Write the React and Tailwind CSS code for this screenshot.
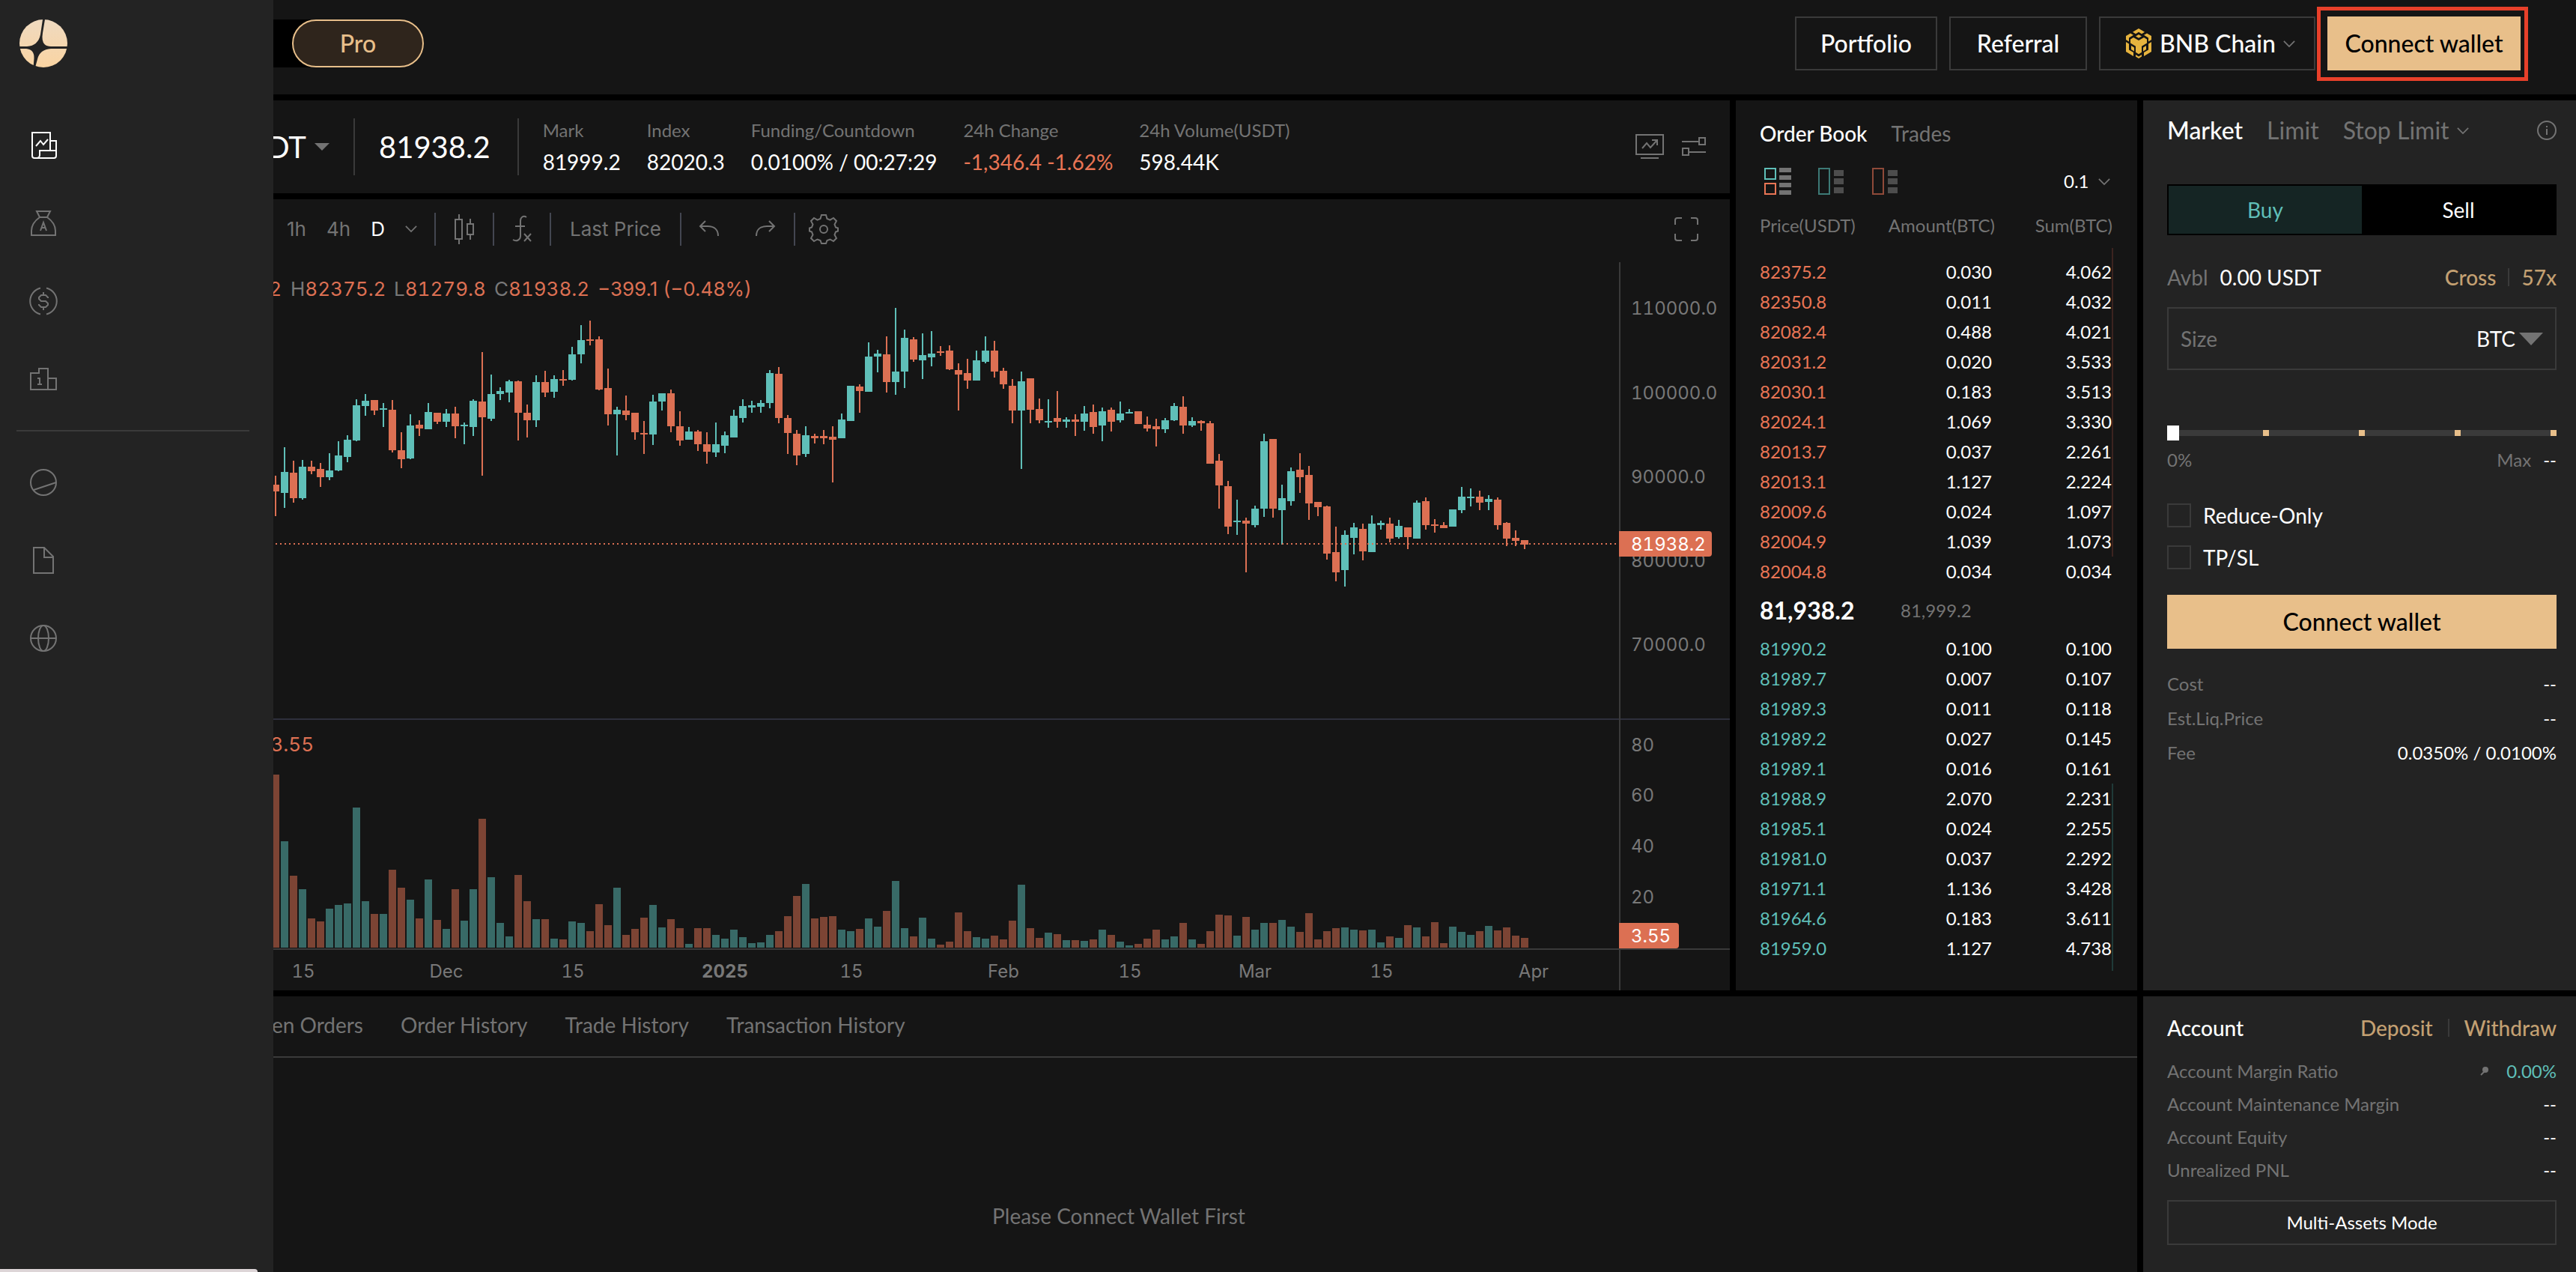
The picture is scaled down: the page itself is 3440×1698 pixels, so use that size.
const UP = "#5fbfb8";
const DOWN = "#dc7053";

// Each candle: direction, high, body top, body bottom, low, volume top (thirds of a pixel down from its pane).
const CANDLES = [
  "r 885 921 948 1047 282", "g 771 870 954 1014 549", "r 825 873 975 993 687", "g 822 849 975 981 741",
  "r 825 849 867 879 858", "r 834 858 891 930 870", "g 795 864 891 903 819", "g 747 804 864 867 804",
  "g 723 741 810 831 798", "g 579 603 744 747 414", "g 558 585 606 645 789", "r 582 582 624 642 840",
  "g 594 615 621 690 840", "r 582 621 783 792 663", "r 711 783 819 855 735", "g 639 684 816 819 783",
  "r 663 681 696 726 858", "g 594 630 699 699 702", "r 633 633 669 678 864", "g 618 636 669 690 900",
  "r 609 636 687 735 741", "g 672 680 686 759 867", "g 579 585 690 726 741", "r 390 588 651 885 459",
  "g 480 558 657 666 693", "g 531 546 558 582 876", "g 501 507 552 591 930", "r 504 507 633 744 684",
  "r 600 633 663 732 789", "g 483 510 663 690 861", "r 465 510 552 570 861", "g 483 498 549 573 939",
  "r 462 498 504 525 942", "g 369 399 501 504 870", "g 282 342 399 435 876", "r 264 338 344 363 909",
  "r 327 339 540 543 801", "r 456 534 639 684 885", "g 609 621 639 804 735", "r 564 624 642 663 924",
  "r 633 633 711 741 900", "r 666 714 720 798 855", "g 561 588 720 762 804", "g 555 555 588 624 894",
  "r 540 555 687 711 861", "r 627 687 744 765 897", "g 690 708 741 741 960", "r 702 708 759 786 897",
  "r 711 759 789 837 897", "g 672 759 792 810 924", "g 708 723 765 795 939", "g 621 645 732 732 903",
  "g 579 606 654 672 933", "g 585 603 612 633 957", "g 582 594 609 633 954", "g 462 474 594 615 924",
  "r 450 477 654 675 909", "r 642 654 714 798 849", "r 702 717 804 843 768", "g 687 723 798 810 720",
  "r 717 726 735 756 858", "r 702 726 735 759 852", "r 687 729 741 912 849", "g 636 660 735 735 903",
  "g 525 525 666 666 909", "r 519 528 546 633 900", "g 351 408 549 549 858", "g 381 396 408 471 891",
  "r 327 399 510 552 828", "g 213 468 510 561 708", "g 300 333 468 534 897", "r 330 339 420 429 930",
  "g 315 402 423 498 855", "g 306 396 411 447 939", "r 366 386 392 405 963", "r 363 384 459 462 951",
  "r 435 462 480 624 834", "r 417 474 504 537 909", "g 384 423 504 504 933", "g 327 384 429 435 939",
  "r 345 384 468 492 927", "r 453 465 519 537 942", "r 498 525 624 675 867", "g 468 507 624 858 723",
  "r 495 495 621 675 897", "r 576 618 663 675 936", "g 579 665 671 693 915", "r 546 654 669 693 921",
  "g 651 660 669 693 945", "r 639 660 669 726 945", "g 606 636 669 705 948", "r 600 630 690 717 942",
  "g 612 627 684 747 903", "r 612 621 669 708 924", "g 588 636 663 672 951", "g 618 630 636 636 966",
  "r 627 627 678 678 960", "r 648 681 696 708 939", "r 657 687 699 768 903", "g 654 663 699 714 942",
  "g 594 606 663 666 930", "r 567 609 684 717 876", "g 651 666 684 690 942", "r 663 666 675 705 960",
  "r 666 675 837 837 909", "r 798 825 924 1017 843", "r 906 927 1089 1119 846", "g 981 1065 1071 1122 927",
  "r 1053 1065 1077 1272 852", "g 1005 1017 1083 1092 903", "g 717 747 1017 1050 876", "r 738 738 1017 1053 876",
  "g 921 975 1023 1162 864", "g 852 867 987 1005 891", "r 795 861 891 954 912", "r 846 882 996 1062 837",
  "r 990 990 1010 1047 942", "r 1005 1008 1197 1220 909", "r 1089 1191 1271 1308 897", "g 1104 1122 1263 1328 894",
  "g 1073 1092 1134 1200 903", "r 1077 1098 1187 1224 906", "g 1044 1077 1191 1191 903", "g 1065 1073 1083 1101 954",
  "r 1053 1077 1137 1152 930", "g 1062 1086 1130 1137 936", "r 1092 1092 1130 1179 885", "g 984 993 1137 1137 894",
  "r 971 987 1083 1101 930", "r 1059 1081 1087 1112 873", "r 1071 1083 1095 1095 957", "g 1020 1020 1089 1089 891",
  "g 930 969 1022 1035 912", "g 936 970 976 1008 924", "r 945 969 993 1022 909", "g 963 977 990 1022 888",
  "r 971 981 1083 1101 906", "r 1071 1073 1137 1167 894", "r 1104 1134 1146 1167 927", "r 1143 1143 1161 1179 936",
].map((row) => {
  const [dir, ...v] = row.split(" ");
  return { up: dir === "g", v: v.map(Number) };
});

const ASKS = [
  ["82375.2", "0.030", "4.062"], ["82350.8", "0.011", "4.032"], ["82082.4", "0.488", "4.021"],
  ["82031.2", "0.020", "3.533"], ["82030.1", "0.183", "3.513"], ["82024.1", "1.069", "3.330"],
  ["82013.7", "0.037", "2.261"], ["82013.1", "1.127", "2.224"], ["82009.6", "0.024", "1.097"],
  ["82004.9", "1.039", "1.073"], ["82004.8", "0.034", "0.034"],
];
const BIDS = [
  ["81990.2", "0.100", "0.100"], ["81989.7", "0.007", "0.107"], ["81989.3", "0.011", "0.118"],
  ["81989.2", "0.027", "0.145"], ["81989.1", "0.016", "0.161"], ["81988.9", "2.070", "2.231"],
  ["81985.1", "0.024", "2.255"], ["81981.0", "0.037", "2.292"], ["81971.1", "1.136", "3.428"],
  ["81964.6", "0.183", "3.611"], ["81959.0", "1.127", "4.738"],
];

function Icon({ w = 48, h = w, vb, className = "", sw = 2, children }) {
  return (
    <svg width={w} height={h} viewBox={vb || `0 0 ${w} ${h}`} fill="none" stroke="currentColor" strokeWidth={sw} className={`shrink-0 ${className}`} aria-hidden="true">
      {children}
    </svg>
  );
}

function Chevron({ className = "" }) {
  return <Icon w={16} h={11} vb="0 0 18 12" className={className}><path d="M1 2l8 8 8-8" /></Icon>;
}

function Logo() {
  return (
    <svg width="64" height="64" viewBox="0 0 64 64" aria-hidden="true">
      <defs>
        <linearGradient id="logoFill" x1="0" y1="0" x2="0" y2="1">
          <stop offset="0" stopColor="#efdac0" />
          <stop offset="1" stopColor="#fad4a2" />
        </linearGradient>
        <clipPath id="logoQuarters">
          <path d="M0 0H31L28 20Q25 35 10 36H0Z" />
          <path d="M34 0L31 18Q28 36 42 36H64V0Z" />
          <path d="M0 39H9Q20 40 19.500 52L18.500 64H0Z" />
          <path d="M64 39H42Q27 40 24 53L21 64H64Z" />
        </clipPath>
      </defs>
      <circle cx="32" cy="32" r="32" fill="url(#logoFill)" clipPath="url(#logoQuarters)" />
    </svg>
  );
}

const NAV_TOP = [
  ["Trade", <><path d="M33 31V7H9v31a3 3 0 0 0 3 3h26a3 3 0 0 0 3-3V18h-8" /><path d="M41 31H19v6a4 4 0 0 1-4 4" /><path d="M14 25l6-7 4 5 6-7" /></>],
  ["Earn", <><path d="M15 8h18l-4 8H19z" /><path d="M19 16C12 21 8 27 8 34v6h32v-6c0-7-4-13-11-18" /><path d="M20 34l4-11 4 11M21 30h6" /></>],
  ["Rewards", <><path d="M20 6.500a18 18 0 0 0 0 35M28 6.500a18 18 0 0 1 0 35" /><path d="M30 20v-1l-3-3h-6l-3 3v2l3 3h6l3 3v2l-3 3h-6l-3-3v-1M24 12v4M24 32v4" /></>],
  ["Leaderboard", <><path d="M7 16h11v-6h12v28H7zM30 23h11v15H30" /><path d="M16 23h3v8M16 31h6" /></>],
];
const NAV_BOTTOM = [
  ["Explore", <><circle cx="24" cy="24" r="17" /><path d="M11 34l30-10" /></>],
  ["Docs", <path d="M25 7H11v34h26V19zM25 7v13h12" />],
  ["Language", <><circle cx="24" cy="24" r="17" /><ellipse cx="24" cy="24" rx="7" ry="17" /><path d="M7 24h34" /></>],
];

function NavItem({ label, active, children }) {
  return (
    <a href="#" aria-label={label} className={`flex h-[104px] items-center pl-[34px] ${active ? "text-white" : "text-[#737373]"}`}>
      <Icon>{children}</Icon>
    </a>
  );
}

function Sidebar() {
  return (
    <aside className="absolute inset-y-0 left-0 z-10 w-[365px] bg-[#232323]">
      <a href="#" aria-label="Home" className="block h-[142px] pt-[26px] pl-[26px]"><Logo /></a>
      <nav>
        {NAV_TOP.map(([l, p], i) => <NavItem key={l} label={l} active={i === 0}>{p}</NavItem>)}
        <hr className="my-4 mr-8 ml-[22px] border-t-2 border-[#3a3a3a]" />
        {NAV_BOTTOM.map(([l, p]) => <NavItem key={l} label={l}>{p}</NavItem>)}
      </nav>
      <div className="absolute bottom-0 left-0 h-1 w-[344px] rounded-tr-md bg-[#ddd5d7]" />
    </aside>
  );
}

function BnbIcon() {
  const side = (
    <>
      <path d="M7 6.500l4 2.300-6 3.600v5L1 15v-5z" />
      <path d="M1 18l4 2.400v8l6 3.600v5L1 31z" />
      <path d="M8 23l4 2.400v5L8 28z" />
    </>
  );
  return (
    <svg width="36" height="40" viewBox="0 0 36 40" fill="#e6b33e" aria-hidden="true">
      <path d="M18 0l8 4.800-4 2.400-4-2.400-4 2.400-4-2.400z" />
      <path d="M18 8l4 2.400-4 2.400-4-2.400z" />
      <path d="M11 12l7 4 7-4 4 2.400v5l-7 4.400v8l-4 2.400-4-2.400v-8l-7-4.400v-5z" />
      <path d="M14 35l4 2.400 4-2.400v2.600L18 40l-4-2.400z" />
      {side}
      <g transform="matrix(-1 0 0 1 36 0)">{side}</g>
    </svg>
  );
}

function Header() {
  const box = "flex h-[72px] items-center justify-center border-2 border-[#3a3a3a] text-[32px] font-medium text-white";
  return (
    <header className="ml-[134px] flex h-[126px] items-center justify-between bg-[#151515] pr-[74px] pb-[10px]">
      <div className="flex h-16 w-[432px] justify-end rounded-full bg-black">
        <button className="h-16 w-44 rounded-full border-2 border-[#e8bf8a] bg-[#2f251c] text-[32px] leading-none font-medium text-[#e8bf8a]">Pro</button>
      </div>
      <div className="flex gap-4">
        <a href="#" className={`${box} min-w-[190px]`}>Portfolio</a>
        <a href="#" className={`${box} min-w-[184px]`}>Referral</a>
        <button className={`${box} min-w-[289px] gap-[10px] pl-2`}>
          <BnbIcon />BNB Chain<Chevron className="text-[#737373]" />
        </button>
        <div className="relative">
          <button className="h-[72px] w-[258px] bg-[#e8bf8a] text-[32px] font-medium text-black">Connect wallet</button>
          <div className="pointer-events-none absolute -top-[13px] -right-[10px] -bottom-[14px] -left-[14px] border-5 border-[#e8402a]" />
        </div>
      </div>
    </header>
  );
}

function Stat({ label, value, tone = "text-white" }) {
  return (
    <div className="flex flex-col gap-[6px]">
      <dt className="text-[24px] leading-9 text-[#737373]">{label}</dt>
      <dd className={`text-[28px] leading-9 ${tone}`}>{value}</dd>
    </div>
  );
}

function Ticker() {
  return (
    <section className="flex h-[124px] items-center bg-[#151515] pr-8">
      <button className="flex w-[306px] items-center justify-end gap-[11px] text-[40px] text-white">
        BTCUSDT
        <Icon w={20} h={10} className="text-[#737373]"><path d="M0 0h20L10 10z" fill="currentColor" stroke="none" /></Icon>
      </button>
      <div className="ml-8 h-[76px] w-[2px] bg-[#3a3a3a]" />
      <div className="mr-9 ml-8 text-[40px] text-white">81938.2</div>
      <div className="h-[76px] w-[2px] bg-[#3a3a3a]" />
      <dl className="ml-8 flex grow gap-[35px] pb-[2px]">
        <Stat label="Mark" value="81999.2" />
        <Stat label="Index" value="82020.3" />
        <Stat label="Funding/Countdown" value="0.0100% / 00:27:29" />
        <Stat label="24h Change" value="-1,346.4 -1.62%" tone="text-[#e97555]" />
        <Stat label="24h Volume(USDT)" value="598.44K" />
      </dl>
      <div className="flex items-center gap-6 text-[#737373]">
        <button aria-label="Chart"><Icon w={38} h={34}><path d="M1 1h36v26H1zM7 32h24M9 19l6-7 5 6 9-10M22 8h7v7" /></Icon></button>
        <button aria-label="Preferences"><Icon w={32} h={26}><path d="M0 6h22M23 1h8v9h-8zM32 20H10M1 15h8v9H1z" /></Icon></button>
      </div>
    </section>
  );
}

function Sep() {
  return <div className="h-11 w-[2px] bg-[#434651]" />;
}

function Toolbar() {
  return (
    <div className="flex h-[84px] items-center pr-[42px] pb-[5px] pl-[249px] font-['Inter',sans-serif] text-[26px] text-[#737373]">
      <div className="flex w-[197px] items-center gap-[27px]">
        <button>1h</button>
        <button>4h</button>
        <button className="text-white">D</button>
        <button aria-label="More intervals"><Chevron /></button>
      </div>
      <Sep />
      <button aria-label="Candles" className="w-[76px]">
        <Icon w={26} h={40} className="mx-auto"><path d="M6 0v6M6 34v6M1 7h9v26H1zM21 6v6M21 28v6M17 13h8v14h-8z" /></Icon>
      </button>
      <Sep />
      <button aria-label="Indicators" className="w-[74px]">
        <Icon w={28} h={40} className="mx-auto"><path d="M20 4c-4-3-8 0-8 5v20c0 5-5 8-10 5M5 16h13M17 26l9 10M26 26l-9 10" /></Icon>
      </button>
      <Sep />
      <button className="w-[172px]">Last Price</button>
      <Sep />
      <button aria-label="Undo" className="w-[74px]"><Icon w={28} h={24} className="mx-auto"><path d="M9 1L2 8l7 7M2 8h10c9 0 14 5 14 13" /></Icon></button>
      <button aria-label="Redo" className="w-[76px]"><Icon w={28} h={24} className="mx-auto"><path d="M19 1l7 7-7 7M26 8H16C7 8 2 13 2 21" /></Icon></button>
      <Sep />
      <button aria-label="Settings" className="w-[76px]">
        <Icon w={40} className="mx-auto">
          <path d="M17 1h6l1.500 5 4 1.700L33 5l4 4-2.500 4.500 1.500 4 3 1v4l-3 1-1.500 4L37 32l-4 4-4.500-2.500-4 1.500-1.500 4h-6l-1.500-4-4-1.500L7 36l-4-4 2.500-4.500-1.500-4-3-1v-4l3-1 1.500-4L3 9l4-4 4.500 2.700 4-1.700z" />
          <circle cx="20" cy="20" r="5" />
        </Icon>
      </button>
      <button aria-label="Fullscreen" className="ml-auto"><Icon w={32}><path d="M1 10V4a3 3 0 0 1 3-3h6M22 1h6a3 3 0 0 1 3 3v6M31 22v6a3 3 0 0 1-3 3h-6M10 31H4a3 3 0 0 1-3-3v-6" /></Icon></button>
    </div>
  );
}

const PRICE_AXIS = [["110000.0", 411], ["100000.0", 524], ["90000.0", 636], ["80000.0", 748], ["70000.0", 860], ["80", 994], ["60", 1061], ["40", 1129], ["20", 1197]];
const TIME_AXIS = [["15", 405], ["Dec", 596], ["15", 765], ["2025", 968], ["15", 1137], ["Feb", 1340], ["15", 1509], ["Mar", 1676], ["15", 1845], ["Apr", 2048]];
const LEGEND = [["H", "82375.2", 390], ["L", "81279.8", 528], ["C", "81938.2", 662]];

function Chart() {
  return (
    <svg viewBox="134 350 2176 972" preserveAspectRatio="xMaxYMin meet" className="block w-full font-['Inter',sans-serif] tabular-nums" role="img" aria-label="BTCUSDT daily candles and volume">
      {CANDLES.map(({ up, v }, i) => {
        const x = 368 + i * 12;
        const [hi, top, bot, lo, vol] = v;
        const r = (n) => Math.round(n / 3);
        return (
          <g key={i} fill={up ? UP : DOWN}>
            <rect x={x - 1} y={340 + r(hi)} width="2" height={r(lo) - r(hi)} />
            <rect x={x - 5} y={340 + r(top)} width="10" height={Math.max(2, r(bot) - r(top))} />
            <rect x={x - 5} y={940 + r(vol)} width="10" height={325 - r(vol)} fill={up ? "#386a67" : "#7c4434"} />
          </g>
        );
      })}
      <path d="M134 726H2160" stroke={DOWN} strokeWidth="2" strokeDasharray="2 4" />
      <path d="M134 960H2310" stroke="#2e2f3c" strokeWidth="2" />
      <path d="M134 1267H2310M2163 350V1322" stroke="#3a3a3a" strokeWidth="2" />
      <g fill="#787878" fontSize="24">
        {PRICE_AXIS.map(([t, y]) => <text key={t} x="2178" y={y + 9}>{t}</text>)}
        {TIME_AXIS.map(([t, x]) => <text key={x} x={x} y="1305" textAnchor="middle" fontWeight={t === "2025" ? 700 : 400}>{t}</text>)}
      </g>
      <path d="M2162 709h120a4 4 0 0 1 4 4v26a4 4 0 0 1-4 4h-120zM2162 1232h76a4 4 0 0 1 4 4v26a4 4 0 0 1-4 4h-76z" fill={DOWN} />
      <g fill="#fff" fontSize="24">
        <text x="2178" y="735">81938.2</text>
        <text x="2178" y="1258">3.55</text>
      </g>
      <g fill={DOWN} fontSize="26">
        <text x="376" y="395" textAnchor="end">82337.2</text>
        {LEGEND.map(([k, v, x]) => <text key={k} x={x - 2} y="395"><tspan fill="#787878">{k}</tspan>{v}</text>)}
        <text x="798" y="395" className="normal-nums">−399.1 (−0.48%)</text>
        <text x="419" y="1003" textAnchor="end">3.55</text>
      </g>
    </svg>
  );
}

function BookRows({ rows, tone, edge, from, to }) {
  return rows.map(([p, a, s], i) => (
    <tr key={p} className="h-10 text-[24px] leading-none text-white">
      <td className={`p-0 ${tone}`}>{p}</td>
      <td className="p-0 pr-1 text-right">{a}</td>
      <td className={`border-r-2 p-0 text-right ${i >= from && i <= to ? edge : "border-transparent"}`}>{s}</td>
    </tr>
  ));
}

function DepthIcon({ kind }) {
  const grey = <path d="M21 3h13v8H21zM21 14h13v8H21zM21 26h13v8H21z" fill="#4d4d4d" stroke="none" />;
  if (kind === "both") {
    return (
      <Icon w={36}>
        <path d="M1 1h14v14H1z" stroke={UP} />
        <path d="M1 21h14v14H1z" stroke="#e97555" />
        <path d="M20 0h16v6H20zM20 10h16v6H20zM20 20h16v6H20zM20 30h16v6H20z" fill="#737373" stroke="none" />
      </Icon>
    );
  }
  return <Icon w={36}><path d="M1 1h14v34H1z" stroke={kind === "bids" ? "#3d7a76" : "#8f4a39"} />{grey}</Icon>;
}

function OrderBook() {
  const th = "p-0 align-middle font-normal";
  return (
    <section className="bg-[#151515] px-8 pt-6">
      <div className="flex h-[43px] items-center gap-8 pb-1 text-[28px]">
        <button className="font-medium text-white">Order Book</button>
        <button className="text-[#737373]">Trades</button>
      </div>
      <div className="flex h-[82px] items-center gap-9 pl-[6px]">
        <button aria-label="Bids and asks"><DepthIcon kind="both" /></button>
        <button aria-label="Bids only"><DepthIcon kind="bids" /></button>
        <button aria-label="Asks only"><DepthIcon kind="asks" /></button>
        <label className="ml-auto flex items-center gap-3 pr-1 text-[#737373]">
          <select aria-label="Price step" className="appearance-none bg-transparent text-[24px] text-white"><option>0.1</option></select>
          <Chevron />
        </label>
      </div>
      <table className="w-full table-fixed border-collapse">
        <thead>
          <tr className="h-9 text-[24px] leading-none text-[#737373]">
            <th className={`${th} text-left`}>Price(USDT)</th>
            <th className={`${th} text-right`}>Amount(BTC)</th>
            <th className={`${th} text-right`}>Sum(BTC)</th>
          </tr>
          <tr className="h-3"><td colSpan={3} className="p-0" /></tr>
        </thead>
        <tbody>
          <tr className="h-3"><td colSpan={3} className="border-r-2 border-[#3c2420] p-0" /></tr>
          <BookRows rows={ASKS} tone="text-[#e97555]" edge="border-[#3c2420]" from={0} to={9} />
          <tr className="h-[63px] leading-none">
            <td className="p-0 text-[32px] font-bold text-white">81,938.2</td>
            <td colSpan={2} className="p-0 pl-[31px] text-[24px] text-[#737373]">81,999.2</td>
          </tr>
          <BookRows rows={BIDS} tone="text-[#5fbfb8]" edge="border-[#1f3a38]" from={5} to={10} />
          <tr className="h-[10px]"><td colSpan={3} className="border-r-2 border-[#1f3a38] p-0" /></tr>
        </tbody>
      </table>
    </section>
  );
}

function Line({ label, children, className = "" }) {
  return (
    <div className={`flex items-center justify-between text-[24px] leading-none ${className}`}>
      <dt className="text-[#737373]">{label}</dt>
      <dd className="flex items-center text-white">{children}</dd>
    </div>
  );
}

function Check({ label }) {
  return (
    <label className="flex items-center gap-4 text-[28px] leading-8 text-white">
      <input type="checkbox" className="size-8 appearance-none border-2 border-[#3a3a3a]" />
      {label}
    </label>
  );
}

function TradeForm() {
  return (
    <section className="bg-[#232323] pt-4 pr-[26px] pl-8">
      <div className="flex h-12 items-center gap-8 text-[32px] text-[#737373]">
        <button className="font-medium text-white">Market</button>
        <button>Limit</button>
        <button className="flex items-center gap-[10px]">Stop Limit<Chevron /></button>
        <button aria-label="Order type info" className="ml-auto"><Icon w={26}><circle cx="13" cy="13" r="12" /><path d="M13 11v8M13 7v2" /></Icon></button>
      </div>
      <div className="mt-12 grid h-[68px] grid-cols-2 border-2 border-black bg-black text-[28px]">
        <button className="bg-[#152524] text-[#5fbfb8]">Buy</button>
        <button className="text-white">Sell</button>
      </div>
      <div className="mt-9 flex h-10 items-center gap-4 text-[28px] text-[#c3a072]">
        <div className="mr-auto flex gap-4 text-white"><span className="text-[#737373]">Avbl</span>0.00 USDT</div>
        <button className="font-medium">Cross</button>
        <div className="h-6 w-[2px] bg-[#3a3a3a]" />
        <button className="font-medium">57x</button>
      </div>
      <div className="mt-5 flex h-[84px] items-center border-2 border-[#3a3a3a] px-4 text-[28px]">
        <input aria-label="Size" placeholder="Size" className="w-full min-w-0 bg-transparent placeholder:text-[#737373]" />
        <select aria-label="Size unit" className="appearance-none bg-transparent text-white"><option>BTC</option></select>
        <Icon w={32} h={17} className="ml-1 text-[#737373]"><path d="M0 0h32L16 17z" fill="currentColor" stroke="none" /></Icon>
      </div>
      <div className="relative mt-[74px] h-5">
        <div className="flex h-full items-center">
          <div className="flex h-2 w-full justify-between bg-[#3a3a3a]">
            {[0, 25, 50, 75, 100].map((n) => <div key={n} className="h-2 w-2 bg-[#e8bf8a]" />)}
          </div>
        </div>
        <input
          type="range" aria-label="Position size percent" defaultValue="0"
          className="absolute inset-0 h-5 w-full appearance-none bg-transparent [&::-webkit-slider-thumb]:h-5 [&::-webkit-slider-thumb]:w-4 [&::-webkit-slider-thumb]:appearance-none [&::-webkit-slider-thumb]:bg-white"
        />
      </div>
      <div className="mt-2 flex h-9 items-center justify-between text-[24px] text-[#737373]">
        <span>0%</span>
        <span className="flex gap-4">Max<span className="text-white">--</span></span>
      </div>
      <div className="mt-10 flex flex-col gap-6">
        <Check label="Reduce-Only" />
        <Check label="TP/SL" />
      </div>
      <button className="mt-[34px] h-[72px] w-full bg-[#e8bf8a] text-[32px] font-medium text-black">Connect wallet</button>
      <dl className="mt-6">
        <Line label="Cost" className="h-[46px]">--</Line>
        <Line label="Est.Liq.Price" className="h-[46px]">--</Line>
        <Line label="Fee" className="h-[46px]">0.0350% / 0.0100%</Line>
      </dl>
    </section>
  );
}

function Account() {
  return (
    <section className="bg-[#232323] pt-5 pr-[26px] pl-8">
      <div className="flex h-11 items-center gap-5 text-[28px] font-medium text-[#c3a072]">
        <h2 className="mr-auto text-white">Account</h2>
        <button>Deposit</button>
        <div className="h-6 w-[2px] bg-[#3a3a3a]" />
        <button>Withdraw</button>
      </div>
      <dl className="mt-[14px] mb-[18px]">
        <Line label="Account Margin Ratio" className="h-11">
          <Icon w={12} className="mr-6 text-[#737373]"><circle cx="8" cy="4" r="4" fill="currentColor" stroke="none" /><path d="M7 6l-5 5" /></Icon>
          <span className="text-[#5fbfb8]">0.00%</span>
        </Line>
        <Line label="Account Maintenance Margin" className="h-11">--</Line>
        <Line label="Account Equity" className="h-11">--</Line>
        <Line label="Unrealized PNL" className="h-11">--</Line>
      </dl>
      <button className="h-[60px] w-full border-2 border-[#3a3a3a] text-[24px] text-white">Multi-Assets Mode</button>
    </section>
  );
}

function Positions() {
  return (
    <section className="col-span-2 bg-[#151515] text-[28px] text-[#737373]">
      <div className="flex h-[82px] items-center gap-[50px] border-b-2 border-[#3a3a3a] pb-1">
        <button className="w-[351px] text-right">Open Orders</button>
        <button>Order History</button>
        <button>Trade History</button>
        <button>Transaction History</button>
      </div>
      <p className="mt-[190px] text-center leading-[42px]">Please Connect Wallet First</p>
    </section>
  );
}

export default function App() {
  return (
    <div className="relative flex min-h-screen flex-col gap-2 overflow-hidden bg-black font-['Lato',sans-serif]">
      <Sidebar />
      <Header />
      <main className="ml-[134px] grid grow grid-cols-[minmax(0,1fr)_536px_578px] grid-rows-[auto_1fr] gap-2">
        <div className="flex flex-col gap-2">
          <Ticker />
          <section className="grow bg-[#151515]">
            <Toolbar />
            <Chart />
          </section>
        </div>
        <OrderBook />
        <TradeForm />
        <Positions />
        <Account />
      </main>
    </div>
  );
}
